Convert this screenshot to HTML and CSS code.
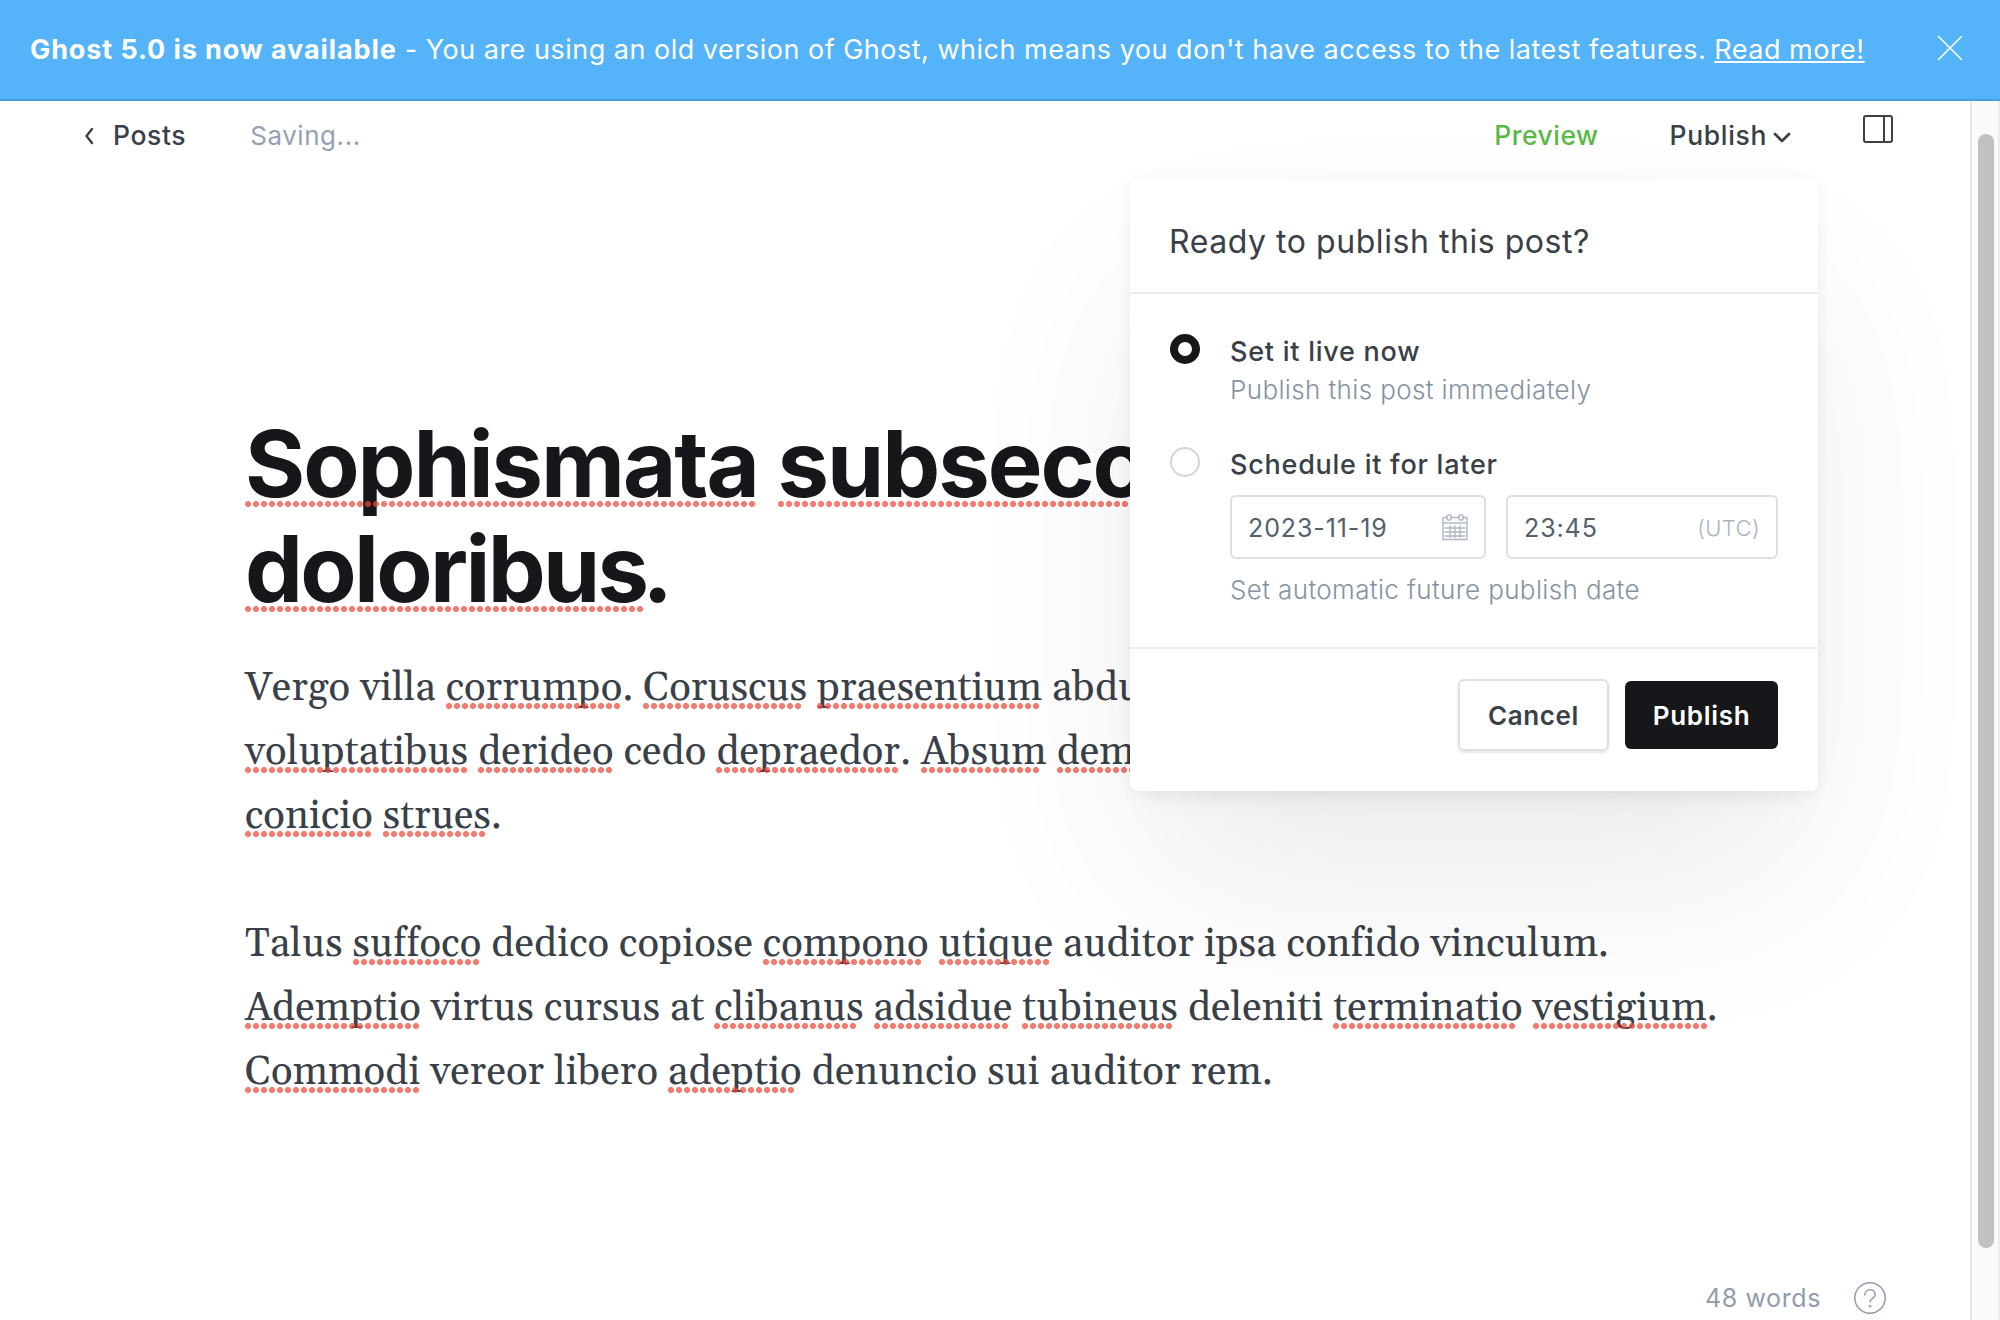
FILE: index.html
```html
<!DOCTYPE html>
<html lang="en">
<head>
<meta charset="utf-8">
<title>Ghost editor</title>
<link rel="stylesheet" href="styles.css">
</head>
<body>
<div class="banner">
  <p class="banner-text"><strong>Ghost 5.0 is now available</strong> - You are using an old version of Ghost, which means you don't have access to the latest features. <a class="banner-link">Read more!</a></p>
  <svg class="banner-close" viewBox="0 0 26 26"><path d="M1.5 1.5l23 23M24.5 1.5l-23 23"/></svg>
</div>
<div class="workspace">
  <main class="editor">
    <header class="toolbar">
      <a class="back"><svg class="back-icon" viewBox="0 0 10 18"><path d="M8 2L2.5 9 8 16"/></svg>Posts</a>
      <span class="status">Saving...</span>
      <a class="preview">Preview</a>
      <div class="publish-menu">
        <span class="publish-trigger">Publish<svg class="chevron" viewBox="0 0 18 11"><path d="M2 2l7 7 7-7"/></svg></span>
        <section class="dialog">
          <h2 class="dialog-title">Ready to publish this post?</h2>
          <div class="dialog-body">
            <div class="option">
              <span class="radio radio-on"></span>
              <div class="option-text">
                <div class="option-label">Set it live now</div>
                <div class="option-hint">Publish this post immediately</div>
              </div>
            </div>
            <div class="option option-later">
              <span class="radio"></span>
              <div class="option-text">
                <div class="option-label">Schedule it for later</div>
                <div class="fields">
                  <div class="field field-date">2023-11-19
                    <svg class="calendar" viewBox="0 0 26 27"><path d="M5 3.500H1v22h24v-22h-4M9 3.500h8M1 9h24M3 14h20M3 18h20M3 22h20M8 12v11.500M13 12v11.500M18 12v11.500"/><rect x="5" y="1" width="4" height="5" rx="1"/><rect x="17" y="1" width="4" height="5" rx="1"/></svg>
                  </div>
                  <div class="field field-time">23:45 <span class="zone">(UTC)</span></div>
                </div>
                <div class="option-hint hint-date">Set automatic future publish date</div>
              </div>
            </div>
          </div>
          <footer class="dialog-footer">
            <div class="button button-cancel">Cancel</div>
            <div class="button button-publish">Publish</div>
          </footer>
        </section>
      </div>
      <svg class="sidebar-icon" viewBox="0 0 30 28"><rect x="1" y="1" width="28" height="26" rx="2"/><path d="M21 1v26"/></svg>
    </header>
    <article class="post">
      <h1 class="post-title"><span class="typo">Sophismata</span> <span class="typo">subseco</span><br><span class="typo tight">doloribus</span><span class="stop">.</span></h1>
      <p class="para">Vergo villa <span class="typo">corrumpo</span>. <span class="typo">Coruscus</span> <span class="typo">praesentium</span> abdu<br><span class="typo">voluptatibus</span> <span class="typo">derideo</span> cedo <span class="typo">depraedor</span>. <span class="typo">Absum</span> <span class="typo">dem</span><br><span class="typo">conicio</span> <span class="typo">strues</span>.</p>
      <p class="para">Talus <span class="typo">suffoco</span> dedico copiose <span class="typo">compono</span> <span class="typo">utique</span> auditor ipsa confido vinculum.<br><span class="typo">Ademptio</span> virtus cursus at <span class="typo">clibanus</span> <span class="typo">adsidue</span> <span class="typo">tubineus</span> deleniti <span class="typo">terminatio</span> <span class="typo">vestigium</span>.<br><span class="typo">Commodi</span> vereor libero <span class="typo">adeptio</span> denuncio sui auditor rem.</p>
    </article>
    <div class="counter">
      <span>48 words</span>
      <svg class="help" viewBox="0 0 32 32"><circle cx="16" cy="16" r="15.200"/><path d="M10.800 13c0-3.200 2.300-5.200 5.200-5.200s5.200 1.900 5.200 4.700c0 3.600-5.100 3.700-5.100 7.500"/><circle class="help-dot" cx="16.100" cy="24.300" r="1.200"/></svg>
    </div>
  </main>
  <div class="scrollbar"><div class="thumb"></div></div>
</div>
</body>
</html>
```
FILE: styles.css
```css
* { box-sizing: border-box; }
html, body { margin: 0; height: 100%; }
body {
  display: flex;
  flex-direction: column;
  overflow: hidden;
  background: #fff;
  color: #394047;
  font-family: Inter, "Liberation Sans", sans-serif;
}
h1, h2, p { margin: 0; font-weight: inherit; }
svg { display: block; flex: none; fill: none; stroke: currentColor; stroke-linecap: round; stroke-linejoin: round; }

.banner {
  flex: none;
  display: flex;
  align-items: center;
  justify-content: space-between;
  height: 101px;
  padding: 0 37px 0 30px;
  border-bottom: 2px solid #459cdf;
  background: #54b3f9;
  color: #fff;
}
.banner-text { font-size: 27px; line-height: 40px; letter-spacing: .5px; white-space: nowrap; }
.banner-text strong { font-weight: 700; letter-spacing: .9px; }
.banner-link { text-decoration: underline; text-decoration-thickness: 2px; text-underline-offset: 2px; text-decoration-skip-ink: none; }
.banner-close { width: 26px; height: 26px; stroke-width: 1.6; margin-bottom: 3px; }

.workspace { flex: 1; display: flex; min-height: 0; }
.editor { flex: 1; display: flex; flex-direction: column; min-width: 0; }

.toolbar {
  flex: none;
  display: flex;
  align-items: center;
  height: 67px;
  padding: 0 77px 0 84px;
  font-size: 26.500px;
  line-height: 40px;
  font-weight: 500;
}
.back { display: flex; align-items: center; gap: 19px; letter-spacing: .6px; }
.back-icon { width: 10px; height: 18px; margin-top: 3px; stroke-width: 2.400; }
.status { margin: 2px auto 0 64px; font-size: 26px; font-weight: 400; letter-spacing: .55px; color: #95a1b1; }
.preview { margin: 1px 71px 0 0; letter-spacing: .5px; color: #5ab946; }
.publish-menu { position: relative; margin: 1px 72px 0 0; }
.publish-trigger { display: flex; align-items: center; gap: 6px; letter-spacing: .65px; }
.chevron { width: 18px; height: 11px; margin-top: 5px; stroke-width: 2.700; }
.sidebar-icon { width: 30px; height: 28px; margin-bottom: 11px; stroke-width: 2; }

.dialog {
  position: absolute;
  z-index: 2;
  top: 64px;
  right: -27px;
  width: 688px;
  height: 612px;
  border-radius: 8px;
  background: #fff;
  box-shadow: 0 1px 16px rgba(0, 0, 0, .05), 0 16px 24px -10px rgba(0, 0, 0, .05), 0 100px 180px -20px rgba(0, 0, 0, .085);
}
.dialog-title {
  height: 115px;
  padding: 43px 40px 0 39px;
  border-bottom: 2px solid #ededee;
  font-size: 32px;
  line-height: 40px;
  font-weight: 400;
  letter-spacing: .55px;
}
.dialog-body { height: 355px; padding: 36px 40px 0; border-bottom: 2px solid #ededee; }
.option { display: flex; gap: 30px; }
.option-later { margin-top: 33px; }
.radio { flex: none; width: 30px; height: 30px; margin-top: 4px; border: 2px solid #cfd6db; border-radius: 50%; }
.radio-on { border: 8px solid #15171a; }
.option-text { flex: 1; }
.option-label { padding-top: 1px; font-size: 27px; line-height: 42px; letter-spacing: .75px; font-weight: 500; }
.option-hint { margin: -2px 0 1px; font-size: 26px; line-height: 38px; letter-spacing: .37px; font-weight: 300; color: #8492a3; }
.hint-date { margin-top: 12px; }
.fields { display: flex; gap: 20px; margin-top: 9px; }
.field {
  display: flex;
  align-items: center;
  justify-content: space-between;
  height: 64px;
  padding: 1px 16px 0;
  border: 2px solid #dddedf;
  border-radius: 6px;
  font-size: 25px;
  letter-spacing: .9px;
  font-weight: 400;
  color: #54606b;
}
.field-date { width: 256px; }
.field-time { width: 272px; }
.calendar { width: 26px; height: 27px; color: #afb8c4; stroke-width: 1.400; }
.zone { font-size: 22px; font-weight: 300; letter-spacing: .4px; color: #abb4c0; }
.dialog-footer { display: flex; justify-content: flex-end; align-items: flex-start; gap: 16px; padding: 30px 40px 0; }
.button {
  display: flex;
  align-items: center;
  justify-content: center;
  padding-top: 2px;
  border-radius: 6px;
  font-size: 26px;
  font-weight: 600;
}
.button-cancel { width: 151px; height: 72px; border: 2px solid #dde1e7; letter-spacing: .6px; box-shadow: 0 2px 3px rgba(0, 0, 0, .1); }
.button-publish { width: 153px; height: 68px; margin-top: 2px; background: #15171a; color: #fff; letter-spacing: .7px; }

.post { padding: 243px 0 0 245px; white-space: nowrap; }
.post-title { margin-bottom: 36px; font-size: 92px; line-height: 105px; font-weight: 700; letter-spacing: -2.050px; color: #15171a; }
.para { margin-bottom: 64px; font-family: Gelasio, Georgia, "Liberation Serif", serif; font-size: 40px; line-height: 64px; letter-spacing: .2px; }
.tight { letter-spacing: -2.700px; }
.stop { margin-left: -4px; }

/* Spell-check marks: 6px dots on an 8px pitch, whole dots only */
.typo { position: relative; display: inline-block; }
.typo::after {
  content: "";
  position: absolute;
  left: 0;
  top: 46px;
  width: 100%;
  width: round(down, calc(100% + 2px), 8px);
  height: 6px;
  background: radial-gradient(circle at 3px 3px, rgba(237, 73, 58, .73) 2.700px, transparent 3.300px) 0 0 / 8px 6px repeat-x;
}
.post-title .typo::after { top: 90px; }

.counter {
  display: flex;
  align-items: center;
  justify-content: flex-end;
  gap: 33px;
  margin-top: 113px;
  padding-right: 84px;
  font-size: 25px;
  line-height: 32px;
  letter-spacing: .6px;
  color: #8f9cac;
}
.help { width: 32px; height: 32px; stroke-width: 1.500; }
.help-dot { fill: currentColor; stroke: none; }

.scrollbar { flex: none; width: 30px; padding: 33px 4px 0 6px; border-left: 2px solid #e8e8e8; border-right: 2px solid #ededed; background: #fafafa; }
.thumb { width: 16px; height: 1114px; border-radius: 8px; background: #c1c1c1; }
```
